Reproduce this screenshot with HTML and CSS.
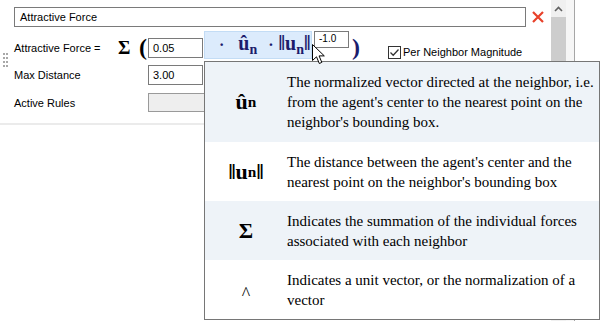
FILE: index.html
```html
<html lang="en">
<head>
    <meta charset="UTF-8">
    <title>Attractive Force</title>
    <link rel="stylesheet" href="styles.css">
</head>
<body>
    <div class="window">
        <div class="panel">
            <div class="name-row">
                <div class="name-box">Attractive Force</div>
                <svg class="remove" width="12" height="12" viewBox="0 0 12 12">
                    <path d="M1 1 L11 11 M11 1 L1 11" stroke="#e8412a" stroke-width="2.2" fill="none"/>
                </svg>
            </div>

            <div class="rule">
                <div class="grip">
                    <span></span><span></span><span></span><span></span>
                    <span></span><span></span><span></span><span></span>
                </div>
                <div class="fields">
                    <div class="field formula-row">
                        <span class="label first">Attractive Force =</span>
                        <span class="sigma">&Sigma;</span>
                        <span class="paren">(</span>
                        <div class="input">0.05</div>
                        <div class="term">
                            <span class="dot">&middot;</span>
                            <span class="vec">&ucirc;<sub>n</sub></span>
                            <span class="dot second">&middot;</span>
                            <span class="vec norm">&#8214;u<sub>n</sub>&#8214;</span>
                        </div>
                        <div class="exp">-1.0</div>
                        <span class="paren close">)</span>
                        <label class="check">
                            <span class="box">
                                <svg width="11" height="11" viewBox="0 0 11 11">
                                    <path d="M1.5 5.5 L4.2 8.2 L9.5 2.5" stroke="#333" stroke-width="1.3" fill="none"/>
                                </svg>
                            </span>
                            Per Neighbor Magnitude
                        </label>
                    </div>
                    <div class="field distance-row">
                        <span class="label">Max Distance</span>
                        <div class="input">3.00</div>
                    </div>
                    <div class="field rules-row">
                        <span class="label">Active Rules</span>
                        <div class="rules-box"></div>
                    </div>
                </div>
            </div>
            <div class="separator"></div>
        </div>

        <div class="scrollbar">
            <div class="arrow">
                <svg width="9" height="6" viewBox="0 0 9 6">
                    <path d="M1 5 L4.5 1.5 L8 5" stroke="#606060" stroke-width="1.6" fill="none"/>
                </svg>
            </div>
            <div class="thumb"></div>
        </div>
        <div class="gutter"></div>
    </div>

    <!-- tooltip explaining the formula symbols -->
    <div class="tooltip">
        <div class="tip-row shaded first-tip">
            <div class="tip-sym">&ucirc;<sub>n</sub></div>
            <div class="tip-text">The normalized vector directed at the neighbor, i.e. from the agent's center to the nearest point on the neighbor's bounding box.</div>
        </div>
        <div class="tip-row">
            <div class="tip-sym">&#8214;u<sub>n</sub>&#8214;</div>
            <div class="tip-text">The distance between the agent's center and the nearest point on the neighbor's bounding box</div>
        </div>
        <div class="tip-row shaded">
            <div class="tip-sym">&Sigma;</div>
            <div class="tip-text">Indicates the summation of the individual forces associated with each neighbor</div>
        </div>
        <div class="tip-row">
            <div class="tip-sym caret">^</div>
            <div class="tip-text">Indicates a unit vector, or the normalization of a vector</div>
        </div>
    </div>

    <svg class="cursor" width="14" height="21" viewBox="0 0 14 21">
        <path d="M0.5 0.5 L0.5 16.5 L4.5 12.8 L7.3 19.5 L9.8 18.4 L7.1 11.9 L12.3 11.9 Z" fill="#fff" stroke="#000" stroke-width="1"/>
    </svg>
</body>
</html>
```

FILE: styles.css
```css
body {
    margin: 0;
    width: 604px;
    height: 321px;
    overflow: hidden;
    position: relative;
    background-color: #fff;
    font-family: "Liberation Sans", Arial, sans-serif;
    font-size: 11px;
    color: #000;
}
.window {
    display: flex;
    height: 321px;
}
.panel {
    width: 551px;
}
.name-row {
    display: flex;
    align-items: center;
    padding: 7px 0 0 14px;
}
.name-box {
    width: 512px;
    height: 20px;
    box-sizing: border-box;
    border: 1px solid #7a7a7a;
    padding: 0 5px;
    line-height: 18px;
}
.remove {
    margin-left: 6px;
}
.rule {
    display: flex;
    margin-top: 4px;
}
.grip {
    width: 14px;
    box-sizing: border-box;
    padding: 22px 0 0 3px;
    display: grid;
    grid-template-columns: 2px 2px;
    grid-auto-rows: 2px;
    gap: 2px 1px;
    align-content: start;
}
.grip span {
    background-color: #a8a8a8;
}
.fields {
    display: flex;
    flex-direction: column;
}
.field {
    display: flex;
    align-items: flex-start;
}
.label {
    width: 134px;
    line-height: 14px;
    margin-top: 3px;
}
.label.first {
    width: 104px;
    margin-top: 10px;
}
.formula-row {
    height: 28px;
}
.sigma {
    width: 21px;
    font: bold 19px "Liberation Serif", serif;
    line-height: 24px;
    margin-top: 5px;
}
.paren {
    width: 9px;
    font: bold 24px "Liberation Serif", serif;
    line-height: 26px;
    margin-top: 3px;
}
.paren.close {
    width: auto;
    margin-left: 3px;
    color: #1c1c6c;
}
.input {
    width: 55px;
    height: 20px;
    box-sizing: border-box;
    border: 1px solid #7a7a7a;
    padding: 0 4px;
    line-height: 18px;
}
.formula-row .input {
    margin-top: 7px;
}
.term {
    margin-left: 1px;
    width: 108px;
    height: 28px;
    box-sizing: border-box;
    background-color: #dcebfc;
    border: 1px solid #c3dcf5;
    display: flex;
    align-items: center;
    padding-left: 14px;
    color: #1c1c6c;
    font: bold 20px "Liberation Serif", "DejaVu Serif", serif;
}
.term .dot {
    font-size: 16px;
}
.term .vec {
    margin-left: 14px;
}
.term .dot.second {
    margin-left: 11px;
}
.term .vec.norm {
    margin-left: 5px;
}
sub {
    font-size: 0.7em;
    vertical-align: -0.25em;
}
.exp {
    margin-left: 2px;
    width: 35px;
    height: 17px;
    box-sizing: border-box;
    border: 1px solid #7a7a7a;
    padding: 1px 4px 0;
    font-size: 10px;
    line-height: 12px;
}
.check {
    display: flex;
    align-items: center;
    gap: 2px;
    margin: 14px 0 0 28px;
    line-height: 14px;
}
.check .box {
    width: 13px;
    height: 13px;
    box-sizing: border-box;
    border: 1px solid #333;
    display: flex;
    align-items: center;
    justify-content: center;
}
.distance-row {
    margin-top: 6px;
}
.rules-row {
    margin-top: 8px;
}
.rules-box {
    width: 57px;
    height: 19px;
    box-sizing: border-box;
    background-color: #eeeeee;
    border: 1px solid #9a9a9a;
}
.separator {
    margin-top: 11px;
    height: 2px;
    background-color: #ebebeb;
}
.scrollbar {
    width: 15px;
    background-color: #f0f0f0;
    display: flex;
    flex-direction: column;
}
.scrollbar .arrow {
    height: 17px;
    display: flex;
    align-items: center;
    justify-content: center;
}
.scrollbar .thumb {
    height: 200px;
    background-color: #cdcdcd;
}
.gutter {
    width: 8px;
    background-color: #f6f6f6;
    border-right: 1px solid #a6a6a6;
}
.tooltip {
    position: absolute;
    left: 204px;
    top: 61px;
    width: 396px;
    height: 259px;
    box-sizing: border-box;
    border: 1px solid #767676;
    background-color: #fff;
    font-family: "Liberation Serif", "Times New Roman", serif;
    font-size: 15px;
    line-height: 20px;
}
.tip-row {
    display: flex;
    padding: 10px 0 9px;
}
.tip-row.first-tip {
    padding-bottom: 10px;
}
.tip-row.shaded {
    background-color: #eef3f8;
}
.tip-sym {
    width: 82px;
    display: flex;
    align-items: center;
    justify-content: center;
    font: bold 22px "Liberation Serif", "DejaVu Serif", serif;
}
.tip-sym.caret {
    font-weight: normal;
    font-size: 18px;
    padding-top: 8px;
}
.tip-text {
    width: 312px;
}
.cursor {
    position: absolute;
    left: 312px;
    top: 44px;
}
```
